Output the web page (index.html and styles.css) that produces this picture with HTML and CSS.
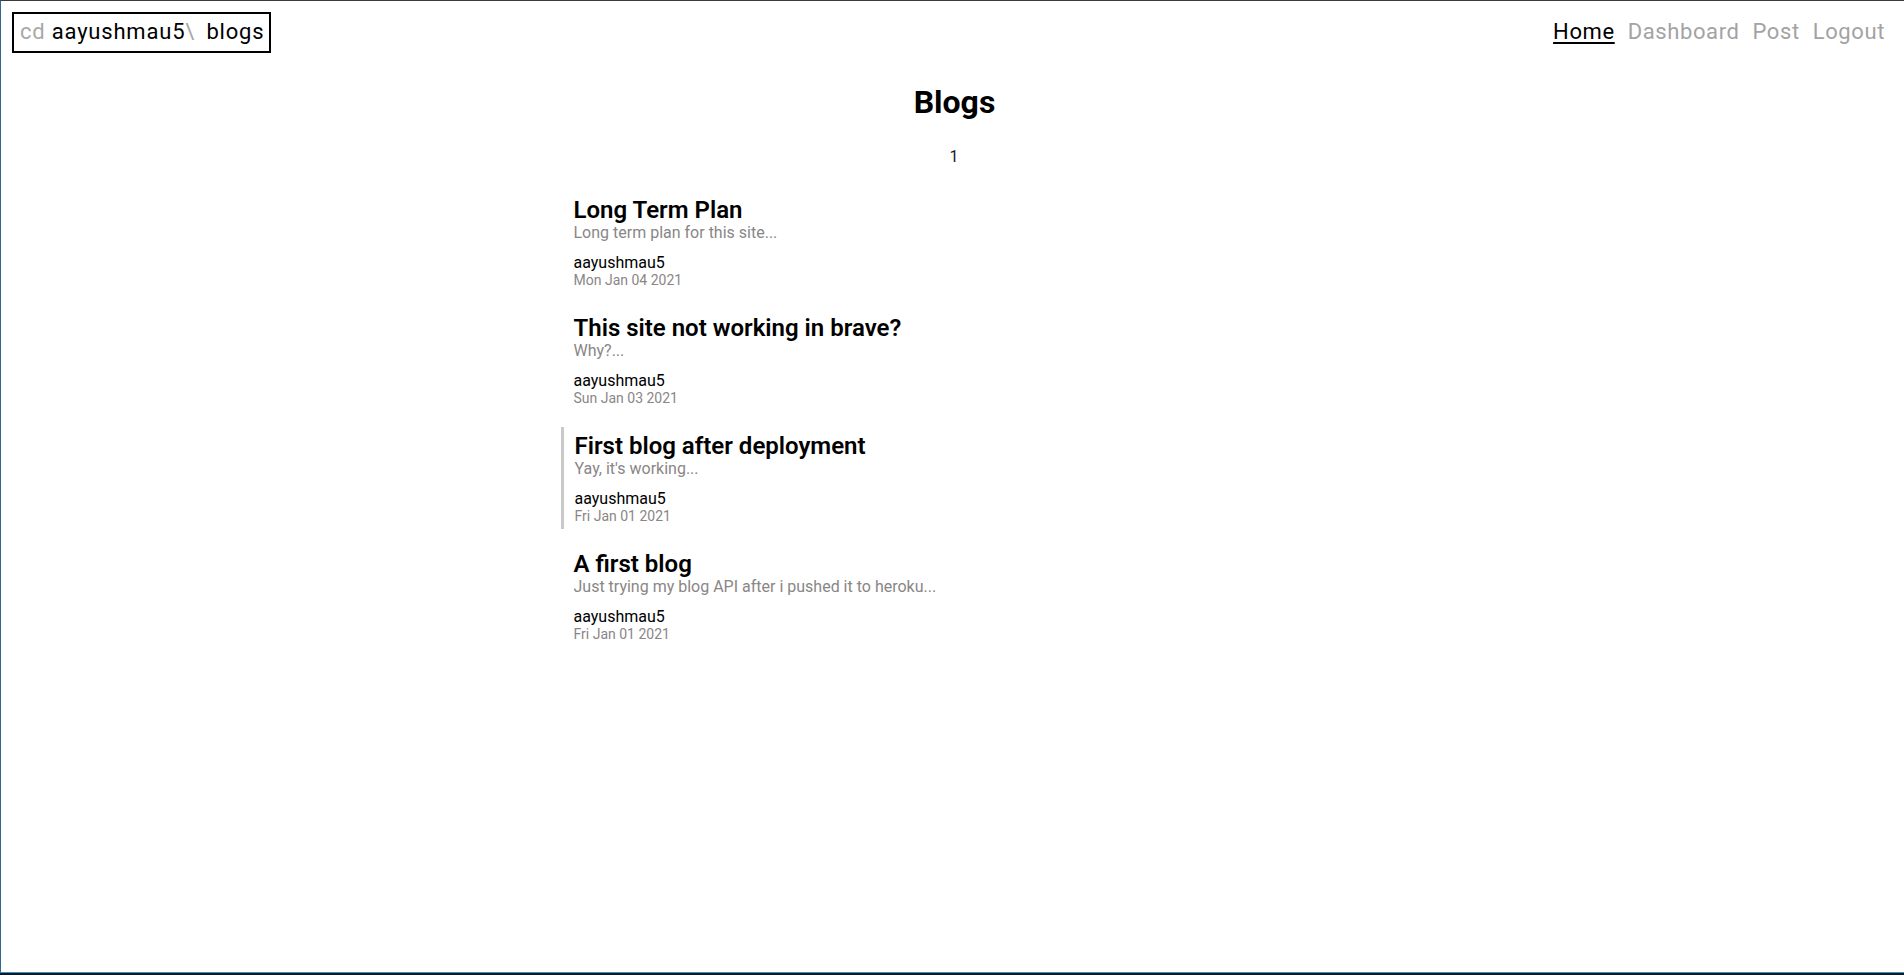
FILE: index.html
```html
<!DOCTYPE html>
<html lang="en">
<head>
<meta charset="utf-8">
<title>Blogs</title>
<link rel="stylesheet" href="styles.css">
</head>
<body>
<div class="window">
  <header class="header">
    <a class="logo" href="#"><span class="dim">cd</span> aayushmau5<span class="dim slash">\</span> blogs</a>
    <nav class="nav">
      <a class="nav-link active" href="#">Home</a>
      <a class="nav-link" href="#">Dashboard</a>
      <a class="nav-link" href="#">Post</a>
      <a class="nav-link" href="#">Logout</a>
    </nav>
  </header>
  <main class="main">
    <h1 class="page-title">Blogs</h1>
    <div class="pager"><span class="page-num">1</span></div>
    <ul class="blog-list">
      <li class="blog-item">
        <h2 class="blog-title">Long Term Plan</h2>
        <p class="blog-desc">Long term plan for this site...</p>
        <p class="blog-author">aayushmau5</p>
        <p class="blog-date">Mon Jan 04 2021</p>
      </li>
      <li class="blog-item">
        <h2 class="blog-title">This site not working in brave?</h2>
        <p class="blog-desc">Why?...</p>
        <p class="blog-author">aayushmau5</p>
        <p class="blog-date">Sun Jan 03 2021</p>
      </li>
      <li class="blog-item hovered">
        <h2 class="blog-title">First blog after deployment</h2>
        <p class="blog-desc">Yay, it's working...</p>
        <p class="blog-author">aayushmau5</p>
        <p class="blog-date">Fri Jan 01 2021</p>
      </li>
      <li class="blog-item">
        <h2 class="blog-title">A first blog</h2>
        <p class="blog-desc">Just trying my blog API after i pushed it to heroku...</p>
        <p class="blog-author">aayushmau5</p>
        <p class="blog-date">Fri Jan 01 2021</p>
      </li>
    </ul>
  </main>
</div>
</body>
</html>
```
FILE: styles.css
```css
* { box-sizing: border-box; }

html, body {
  margin: 0;
  padding: 0;
  height: 975px;
  overflow: hidden;
}

body {
  background: #0e1821;
  font-family: Roboto, "Liberation Sans", sans-serif;
  color: #000;
}

.window {
  height: 973px;
  background: #fff;
  border-top: 1px solid #3a3a3a;
  border-left: 1px solid #2c6a92;
  border-bottom: 1px solid #3b8fc8;
}

.header {
  display: flex;
  justify-content: space-between;
  align-items: center;
  padding: 11px 19px 0 11px;
}

.logo {
  display: inline-block;
  height: 41px;
  border: 2px solid #000;
  padding: 0 5px 2px 6px;
  font-size: 22px;
  line-height: 35px;
  letter-spacing: 0.8px;
  color: #000;
  text-decoration: none;
}

.dim { color: #a8a8a8; }

.slash { margin-right: 5px; }

.nav {
  display: flex;
  gap: 13px;
  padding-bottom: 2px;
  font-size: 22px;
  line-height: 26px;
  letter-spacing: 0.6px;
}

.nav-link {
  color: #a3a3a3;
  text-decoration: none;
}

.nav-link.active {
  color: #000;
  text-decoration: underline;
  text-decoration-thickness: 2px;
  text-underline-offset: 3px;
}

.main {
  display: flex;
  flex-direction: column;
  align-items: center;
}

.page-title {
  margin: 30px 0 0 4px;
  font-size: 32px;
  line-height: 38px;
  font-weight: 700;
}

.pager {
  margin: 26px 0 0 3px;
  font-size: 16px;
  line-height: 19px;
}

.page-num { color: #1a1a2a; }

.blog-list {
  list-style: none;
  margin: 25px 0 0;
  padding: 0;
  width: 780px;
}

.blog-item {
  padding: 6px 0 6px 10px;
  margin: 0 0 16px -2px;
  border-left: 3px solid transparent;
}

.blog-item.hovered {
  border-left-color: #c9c9c9;
  padding-left: 11px;
}

.blog-title {
  margin: 0;
  font-size: 24px;
  line-height: 26px;
  font-weight: 600;
  color: #000;
}

.blog-desc {
  margin: 0;
  font-size: 16px;
  line-height: 20px;
  color: #898686;
}

.blog-author {
  margin: 10px 0 0;
  font-size: 16px;
  line-height: 20px;
  color: #000;
}

.blog-date {
  margin: 0;
  font-size: 14px;
  line-height: 14px;
  color: #8a8686;
}
```
